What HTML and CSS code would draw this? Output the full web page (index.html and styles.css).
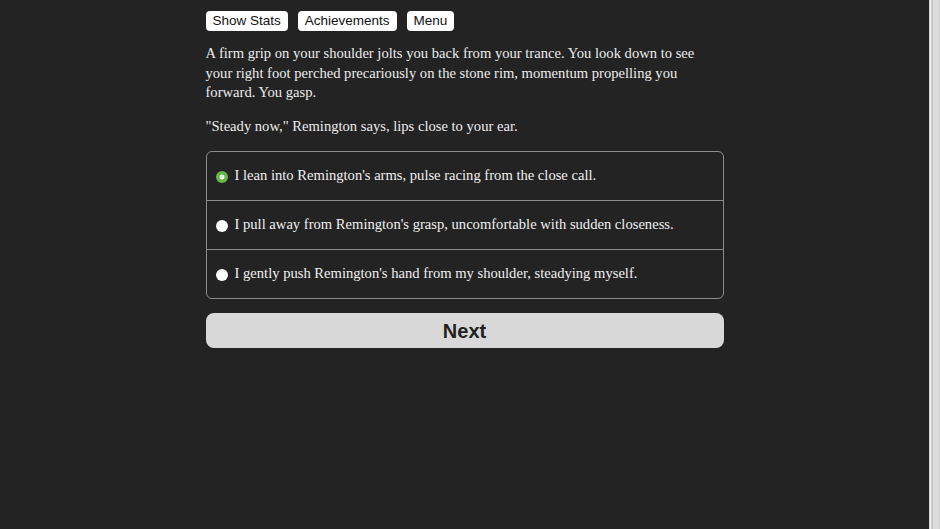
FILE: index.html
```html
<!DOCTYPE html>
<html lang="en">
<head>
<meta charset="utf-8">
<title>Story</title>
<link rel="stylesheet" href="styles.css">
</head>
<body>
<main class="page">
  <div class="column">
    <nav class="toolbar">
      <button class="tool-btn">Show Stats</button>
      <button class="tool-btn">Achievements</button>
      <button class="tool-btn">Menu</button>
    </nav>
    <p class="story">A firm grip on your shoulder jolts you back from your trance. You look down to see your right foot perched precariously on the stone rim, momentum propelling you forward. You gasp.</p>
    <p class="story">"Steady now," Remington says, lips close to your ear.</p>
    <div class="choices">
      <label class="choice"><span class="radio checked"></span><span class="choice-text">I lean into Remington's arms, pulse racing from the close call.</span></label>
      <label class="choice"><span class="radio"></span><span class="choice-text">I pull away from Remington's grasp, uncomfortable with sudden closeness.</span></label>
      <label class="choice"><span class="radio"></span><span class="choice-text">I gently push Remington's hand from my shoulder, steadying myself.</span></label>
    </div>
    <button class="next-btn">Next</button>
  </div>
</main>
<aside class="scrollbar"></aside>
</body>
</html>
```

FILE: styles.css
```css
html, body {
  margin: 0;
  padding: 0;
  height: 100%;
}
body {
  display: flex;
  background: #232323;
  overflow: hidden;
}
.page {
  flex: 1;
  display: flex;
  justify-content: center;
}
.column {
  width: 518px;
  padding-top: 11px;
}
.toolbar {
  display: flex;
  gap: 10px;
  margin-bottom: 13px;
}
.tool-btn {
  height: 20px;
  padding: 0 7px;
  border: none;
  border-radius: 4px;
  background: #ffffff;
  color: #111;
  font-family: "Liberation Sans", Arial, sans-serif;
  font-size: 13.5px;
  line-height: 20px;
}
.story {
  margin: 0 0 14px;
  font-family: "Liberation Serif", "Times New Roman", serif;
  font-size: 14.6px;
  line-height: 19.5px;
  color: #ececec;
}
.choices {
  margin-top: 15px;
  border: 1px solid #8c8c8c;
  border-radius: 6px;
  overflow: hidden;
}
.choice {
  display: flex;
  align-items: center;
  height: 48px;
  padding-left: 9px;
  gap: 7px;
  font-family: "Liberation Serif", "Times New Roman", serif;
  font-size: 14.6px;
  color: #f0f0f0;
}
.choice-text {
  margin-top: -1px;
}
.choice + .choice {
  border-top: 1px solid #8c8c8c;
}
.radio {
  width: 12px;
  height: 12px;
  border-radius: 50%;
  background: #ffffff;
  flex: none;
  margin-top: 2px;
}
.radio.checked {
  background: radial-gradient(circle, #e4f4da 0 2.2px, #6ab54a 2.8px);
}
.next-btn {
  display: block;
  width: 100%;
  height: 35px;
  margin-top: 14px;
  padding-top: 2px;
  border: none;
  border-radius: 8px;
  background: #d8d8d8;
  color: #222;
  font-family: "Liberation Sans", Arial, sans-serif;
  font-weight: bold;
  font-size: 20px;
}
.scrollbar {
  width: 11px;
  flex: none;
  background: linear-gradient(to right, #d4d4d4 0 1px, #f6f6f6 1px 2px, #c8c8c8 2px 4px, #dcdcdc 4px 10px, #cfcfcf 10px);
}
```
